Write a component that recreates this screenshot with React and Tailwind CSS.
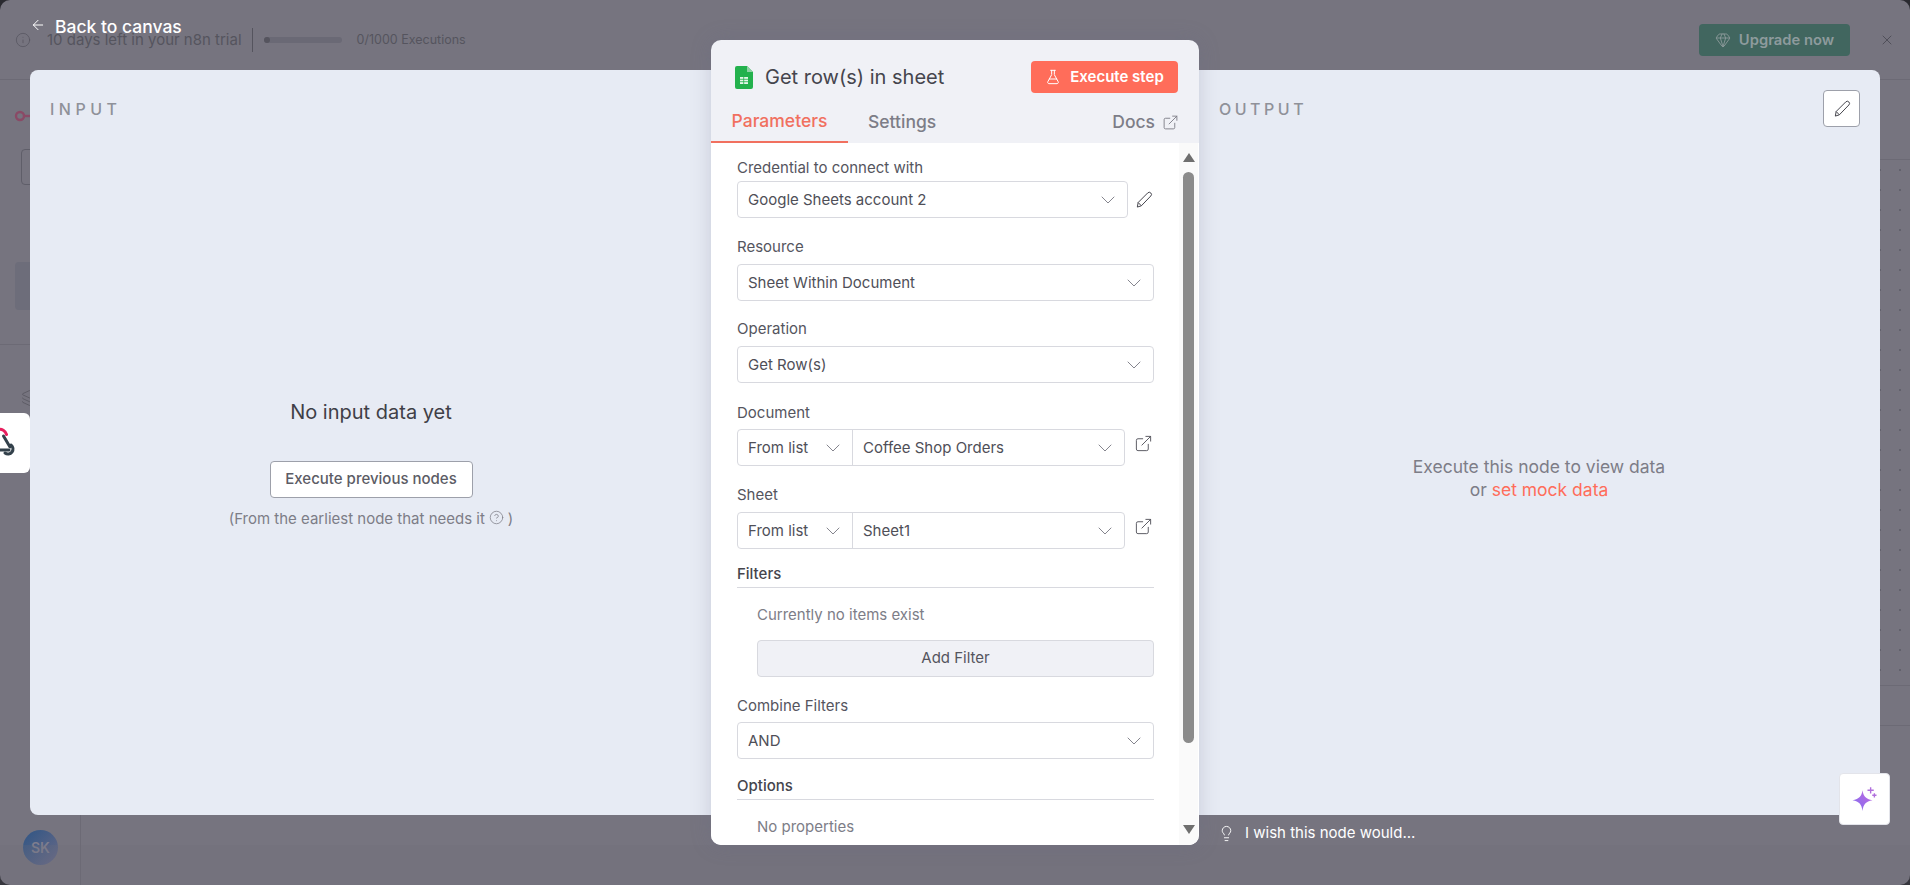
import React from 'react';
import {
  ArrowLeft,
  ChevronDown,
  ExternalLink,
  FlaskConical,
  Gem,
  Info,
  Layers,
  Lightbulb,
  X,
  CircleHelp,
} from 'lucide-react';

const Select = ({ value, className = '' }) => (
  <div className={`flex h-[37px] items-center justify-between rounded-[4px] border border-[#d8d9df] bg-white pl-[10px] pr-[7px] text-[15px] text-[#4f4f58] ${className}`}>
    <span className="mt-[2px]">{value}</span>
    <ChevronDown className="h-6 w-6 text-[#85858e]" strokeWidth={1} />
  </div>
);

const ModeSelect = ({ value }) => (
  <div className="flex h-[37px] w-[388px] rounded-[4px] border border-[#d8d9df] bg-white text-[15px] text-[#4f4f58]">
    <div className="flex w-[115px] items-center justify-between border-r border-[#d8d9df] pl-[10px] pr-[7px]">
      <span className="mt-[2px]">From list</span>
      <ChevronDown className="h-6 w-6 text-[#85858e]" strokeWidth={1} />
    </div>
    <div className="flex flex-1 items-center justify-between pl-[10px] pr-[7px]">
      <span className="mt-[2px]">{value}</span>
      <ChevronDown className="h-6 w-6 text-[#85858e]" strokeWidth={1} />
    </div>
  </div>
);

const Label = ({ children, className = '' }) => (
  <div className={`h-5 text-[15px] leading-5 text-[#55555e] ${className}`}>{children}</div>
);

const PenIcon = ({ className }) => (
  <svg viewBox="0 0 24 24" fill="none" stroke="currentColor" strokeWidth="1.200" strokeLinejoin="round" className={className}>
    <path d="M4 20.500l1-5.500L16.500 3.500a2.500 2.500 0 0 1 3.700 3.700L8.800 19z" />
    <path d="M5 15l3.800 4" />
  </svg>
);

const SheetsIcon = () => (
  <svg viewBox="0 0 18 23" className="h-[23px] w-[18px]">
    <path d="M2 0h10l6 6v15a2 2 0 0 1-2 2H2a2 2 0 0 1-2-2V2a2 2 0 0 1 2-2z" fill="#23b14d" />
    <path d="M12 0l6 6h-6z" fill="#8ed1a4" />
    <path d="M5 11h8v7H5z" fill="#e6f6ea" />
    <path d="M5 13.300h8M5 15.700h8M8.700 11v7" stroke="#23b14d" strokeWidth="0.8" />
  </svg>
);

const Sparkles = () => (
  <svg viewBox="0 0 24 24" className="h-[30px] w-[30px]">
    <defs>
      <linearGradient id="spark" x1="0" y1="1" x2="1" y2="0">
        <stop offset="0" stopColor="#7f6cf0" />
        <stop offset="1" stopColor="#c46be0" />
      </linearGradient>
    </defs>
    <path d="M10 5c.8 5 2.500 6.800 8 8-5.500 1.200-7.200 3-8 8.500-.8-5.500-2.500-7.300-8-8.500 5.500-1.200 7.200-3 8-8z" fill="url(#spark)" />
    <path d="M16.500 2.500v5M14 5h5" stroke="#b06fdc" strokeWidth="1.100" />
    <path d="M19.500 7.300v3.400M17.800 9h3.400" stroke="#b06fdc" strokeWidth="1.100" />
  </svg>
);

// only the right part of the webhook logo shows, the rest is cut off by the page edge
const WebhookPartial = () => (
  <svg viewBox="0 0 30 60" fill="none" strokeLinecap="round" className="h-[60px] w-[30px]">
    <path d="M-2 16.500A7 7 0 0 1 6.500 21.500" stroke="#e8205f" strokeWidth="3" />
    <path d="M3.500 23L10 34" stroke="#33414b" strokeWidth="3" />
    <path d="M-1 37H9" stroke="#33414b" strokeWidth="3" />
    <path d="M11 32A5 5 0 1 1 5 40" stroke="#33414b" strokeWidth="3" />
  </svg>
);

const App = () => {
  return (
    <div className="relative h-[885px] w-[1910px] overflow-hidden bg-[#2a2a30] font-['Inter',sans-serif]">
      {/* dimmed editor behind the modal */}
      <div className="flex h-full flex-col rounded-[10px] bg-[#76747f]">
        <div className="flex h-20 items-center border-b border-[#6c6a75] pl-[15px] pr-[15px]">
          <Info className="h-4 w-4 text-[#55545e]" strokeWidth={1.100} />
          <span className="ml-4 mt-[2px] text-[15px] text-[#55545e]">10 days left in your n8n trial</span>
          <div className="ml-[10px] h-6 w-px bg-[#55545e]" />
          <div className="ml-[11px] h-[6px] w-[78px] rounded-full bg-[#6a6975]">
            <div className="h-[6px] w-[6px] rounded-full bg-[#55545e]" />
          </div>
          <span className="ml-[15px] mt-[2px] text-[12.500px] text-[#55545e]">0/1000 Executions</span>
          <div className="ml-auto flex h-8 w-[151px] items-center justify-center gap-2 rounded-[4px] bg-[#41665f] text-[14.750px] font-semibold text-[#8e9b9d]">
            <Gem className="h-4 w-4" strokeWidth={1.300} />
            <span className="mt-[2px]">Upgrade now</span>
          </div>
          <X className="ml-[29px] h-4 w-4 text-[#4d4c56]" strokeWidth={1.400} />
        </div>
        <div className="flex flex-1">
          <div className="flex w-[81px] flex-col border-r border-[#6c6a75]">
            <svg viewBox="0 0 24 12" fill="none" stroke="#8a4a66" strokeWidth="2.400" className="ml-[14px] mt-[30px] h-3 w-6">
              <circle cx="6" cy="6" r="4" />
              <path d="M10 6h14" />
            </svg>
            <div className="ml-[21px] mt-[27px] h-9 w-[50px] rounded-[4px] border border-[#5f5e69]" />
            <div className="ml-[15px] mt-[77px] h-[48px] w-[50px] rounded-[4px] bg-[#6d6d7a]" />
            <div className="mt-[34px] border-t border-[#6c6a75]" />
            <Layers className="ml-[21px] mt-[44px] h-[18px] w-[18px] text-[#55545e]" strokeWidth={1} />
            <div className="ml-[23px] mt-[423px] flex h-[35px] w-[35px] items-center justify-center rounded-full bg-[linear-gradient(135deg,#2f5585,#6a6a86)] text-[14px] font-semibold text-[#7e7d8e]">
              SK
            </div>
          </div>
          <div className="flex flex-1 flex-col items-end">
            <div className="flex h-[605px] w-[60px] flex-col bg-[radial-gradient(circle,#62616c_1px,transparent_1px)] bg-[size:20px_20px]">
              <div className="h-20 border-b border-[#6c6a75] bg-[#76747f]" />
              <div className="mt-[21px] flex w-[30px] flex-col gap-[11px]">
                <div className="h-[52px] rounded-[5px] border border-[#62616c]" />
                <div className="h-[51px] rounded-[5px] border border-[#62616c]" />
                <div className="h-[52px] rounded-[5px] border border-[#62616c]" />
                <div className="h-[51px] rounded-[5px] border border-[#62616c]" />
              </div>
            </div>
            <div className="flex h-[41px] w-[60px] items-center border-y border-[#6c6a75] pl-[17px]">
              <ChevronDown className="h-4 w-4 text-[#55545e]" strokeWidth={1.300} />
            </div>
          </div>
        </div>
      </div>
      <div className="absolute inset-x-0 top-[845px] h-10 bg-[#6f6d78]/20" />

      {/* node detail view */}
      <div className="absolute inset-x-[30px] top-[70px] flex h-[745px] rounded-[8px] bg-[#e7ebf4]">
        <div className="w-[682px]">
          <div className="pl-5 pt-[29px] text-[16px] font-medium leading-5 tracking-[4.500px] text-[#8f9199]">INPUT</div>
          <div className="flex flex-col items-center pt-[281px]">
            <div className="text-[20px] leading-6 text-[#3f3f47]">No input data yet</div>
            <button className="mt-[37px] h-[37px] w-[203px] rounded-[4px] border border-[#9da0aa] bg-white text-[15px] font-medium text-[#5c5c65]">
              Execute previous nodes
            </button>
            <div className="mt-[11px] flex items-center gap-1 text-[15px] leading-5 text-[#7d7d87]">
              <span>(From the earliest node that needs it</span>
              <CircleHelp className="mb-1 h-[15px] w-[15px]" strokeWidth={1.200} />
              <span>)</span>
            </div>
          </div>
        </div>
        <div className="flex-1 pl-[507px]">
          <div className="flex justify-between pr-5 pt-5">
            <div className="pt-[9px] text-[16px] font-medium leading-5 tracking-[3.500px] text-[#8f9199]">OUTPUT</div>
            <button className="flex h-[37px] w-[37px] items-center justify-center rounded-[4px] border border-[#9da0aa] bg-white">
              <PenIcon className="h-5 w-5 text-[#45454d]" />
            </button>
          </div>
          <div className="pr-[21px] pt-[328px] text-center text-[17.500px] leading-[23px] text-[#7d7d87]">
            <div>Execute this node to view data</div>
            <div>or <span className="text-[#ff6d5a]">set mock data</span></div>
          </div>
        </div>
      </div>

      <div className="absolute left-[30px] top-[14px] flex items-center gap-[9px] text-[17.500px] font-medium text-white">
        <ArrowLeft className="mb-1 h-4 w-4" strokeWidth={1.500} />
        <span>Back to canvas</span>
      </div>

      <div className="absolute left-0 top-[413px] h-[60px] w-[30px] overflow-hidden rounded-r-[6px] bg-white">
        <WebhookPartial />
      </div>

      <div className="absolute left-[1218px] top-[822px] flex items-center gap-[10px] text-[15px] text-white">
        <Lightbulb className="h-[17px] w-[17px]" strokeWidth={1.300} />
        <span>I wish this node would...</span>
      </div>

      <div className="absolute left-[1839px] top-[773px] flex h-[52px] w-[51px] items-center justify-center rounded-[4px] border border-[#e3e4ea] bg-white">
        <Sparkles />
      </div>

      <div className="absolute left-[711px] top-10 flex h-[805px] w-[488px] flex-col overflow-hidden rounded-[10px] bg-[#f0f1f6] shadow-[0_0_20px_rgba(100,105,130,0.25)]">
        <div className="flex items-center pl-[24px] pr-[21px] pt-[21px]">
          <SheetsIcon />
          <span className="ml-[12px] text-[20px] font-normal leading-6 text-[#45454d]">Get row(s) in sheet</span>
          <button className="ml-auto flex h-8 w-[147px] items-center justify-center gap-[9px] rounded-[4px] bg-[#ff6d5a] text-[15px] font-semibold text-white">
            <FlaskConical className="h-4 w-4" strokeWidth={1.500} />
            <span className="mt-px">Execute step</span>
          </button>
        </div>
        <div className="mt-[9px] flex h-[41px] items-center pr-[20px] text-[17.500px]">
          <div className="flex h-full w-[137px] items-center justify-center border-b-2 border-[#f1705f] font-medium text-[#f1705f]">Parameters</div>
          <div className="ml-5 font-medium text-[#7d7d87]">Settings</div>
          <div className="ml-auto flex items-center gap-[7px] font-medium text-[#7d7d87]">
            <span>Docs</span>
            <ExternalLink className="h-[17px] w-[17px]" strokeWidth={1.300} />
          </div>
        </div>
        <div className="flex min-h-0 flex-1 bg-white">
          <div className="w-[468px] pl-[26px] pr-[25px] pt-[15px]">
            <Label>Credential to connect with</Label>
            <div className="mt-[3px] flex items-center">
              <Select value="Google Sheets account 2" className="w-[392px]" />
              <PenIcon className="ml-[6px] h-5 w-5 text-[#45454d]" />
            </div>

            <Label className="mt-[19px]">Resource</Label>
            <Select value="Sheet Within Document" className="mt-[7px] w-[417px]" />

            <Label className="mt-[18px]">Operation</Label>
            <Select value="Get Row(s)" className="mt-[7px] w-[417px]" />

            <Label className="mt-[20px]">Document</Label>
            <div className="mt-[6px] flex items-start">
              <ModeSelect value="Coffee Shop Orders" />
              <ExternalLink className="ml-[9px] mt-[5px] h-[19px] w-[19px] text-[#55555e]" strokeWidth={1.200} />
            </div>

            <Label className="mt-[19px]">Sheet</Label>
            <div className="mt-[7px] flex items-start">
              <ModeSelect value="Sheet1" />
              <ExternalLink className="ml-[9px] mt-[5px] h-[19px] w-[19px] text-[#55555e]" strokeWidth={1.200} />
            </div>

            <div className="mt-[15px] h-6 border-b border-[#d8d9df] text-[15px] font-medium leading-5 text-[#45454d]">Filters</div>
            <div className="pl-5">
              <div className="mt-[17px] h-5 text-[15px] leading-5 text-[#7d7d87]">Currently no items exist</div>
              <button className="mt-[15px] h-[37px] w-[397px] rounded-[4px] border border-[#d8d9df] bg-[#f0f1f6] text-[15px] text-[#55555e]">Add Filter</button>
            </div>

            <Label className="mt-[19px]">Combine Filters</Label>
            <Select value="AND" className="mt-[6px] w-[417px]" />

            <div className="mt-[17px] h-6 border-b border-[#d8d9df] text-[15px] font-medium leading-5 text-[#45454d]">Options</div>
            <div className="mt-[17px] h-5 pl-5 text-[15px] leading-5 text-[#7d7d87]">No properties</div>
          </div>
          <div className="flex w-[19px] flex-col items-center bg-[#fafafa] pt-[10px]">
            <div className="h-0 w-0 border-x-[6px] border-b-[9px] border-x-transparent border-b-[#6f6f6f]" />
            <div className="mt-[10px] h-[571px] w-[11px] rounded-full bg-[#8b8b8b]" />
            <div className="mt-[82px] h-0 w-0 border-x-[6px] border-t-[9px] border-x-transparent border-t-[#6f6f6f]" />
          </div>
        </div>
      </div>
    </div>
  );
};

export default App;
